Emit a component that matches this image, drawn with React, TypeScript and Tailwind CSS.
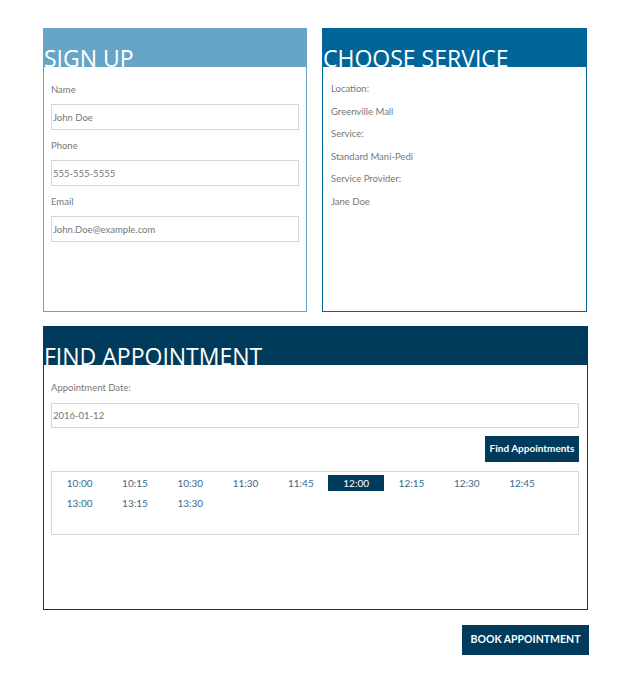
import { useState } from "react";

const times = ["10:00", "10:15", "10:30", "11:30", "11:45", "12:00", "12:15", "12:30", "12:45", "13:00", "13:15", "13:30"];

function CardHeader({ title, color }: { title: string; color: string }) {
  return (
    <div className={`h-[38px] overflow-hidden ${color}`}>
      <h2 className="pt-[18px] text-[23px] leading-none font-normal text-white font-['Open_Sans',sans-serif]">
        {title}
      </h2>
    </div>
  );
}

export default function App() {
  const [selected, setSelected] = useState("12:00");

  return (
    <div className="min-h-screen bg-white font-['Lato',sans-serif] text-[9.5px] text-[#777]">
      <div className="ml-[43px] w-[545px] pt-[28px]">
        <div className="grid grid-cols-[264px_265px] gap-[15px]">
          {/* sign up */}
          <div className="h-[284px] border border-[#67a5c7] bg-white">
            <CardHeader title="SIGN UP" color="bg-[#67a5c7]" />
            <div className="px-[7px] pt-[15px]">
              {[
                ["Name", "John Doe"],
                ["Phone", "555-555-5555"],
                ["Email", "John.Doe@example.com"],
              ].map(([label, value]) => (
                <div key={label} className="mb-[8px]">
                  <label className="block leading-[15px] mb-[7px]">{label}</label>
                  <input
                    defaultValue={value}
                    className="block w-full h-[26px] border border-[#d6d6d6] px-px text-[9.5px] text-[#777] outline-none"
                  />
                </div>
              ))}
            </div>
          </div>

          {/* choose service */}
          <div className="h-[284px] border border-[#006699] bg-white">
            <CardHeader title="CHOOSE SERVICE" color="bg-[#006699]" />
            <div className="px-2 pt-[11px] leading-[22.6px]">
              <p>Location:</p>
              <p>Greenville Mall</p>
              <p>Service:</p>
              <p>Standard Mani-Pedi</p>
              <p>Service Provider:</p>
              <p>Jane Doe</p>
            </div>
          </div>
        </div>

        {/* find appointment */}
        <div className="mt-[14px] h-[284px] border border-[#003b5c] bg-white">
          <CardHeader title="FIND APPOINTMENT" color="bg-[#003b5c]" />
          <div className="pl-[7px] pr-[8px] pt-[14.5px]">
            <label className="block leading-[15px] mb-[8.5px]">Appointment Date:</label>
            <input
              defaultValue="2016-01-12"
              className="block w-full h-[25px] border border-[#d6d6d6] px-px text-[9.5px] text-[#777] outline-none"
            />
            <div className="flex justify-end mt-[7.5px]">
              <button className="h-[26px] w-[94px] bg-[#003b5c] text-white text-[10px] font-bold">
                Find Appointments
              </button>
            </div>
            <div className="mt-[9px] h-[64px] border border-[#d6d6d6] pt-[3.5px]">
              <div className="flex flex-wrap">
                {times.map(t => (
                  <button
                    key={t}
                    onClick={() => setSelected(t)}
                    className={`w-[55.3px] h-[16px] mb-[4px] leading-[16px] text-[10px] ${
                      selected === t ? "bg-[#003b5c] text-white" : "text-[#3d6985]"
                    }`}
                  >
                    {t}
                  </button>
                ))}
              </div>
            </div>
          </div>
        </div>

        <div className="flex justify-end mt-[15px] -mr-px">
          <button className="h-[30px] w-[127px] bg-[#003b5c] text-white text-[10.5px] font-bold">
            BOOK APPOINTMENT
          </button>
        </div>
      </div>
    </div>
  );
}
